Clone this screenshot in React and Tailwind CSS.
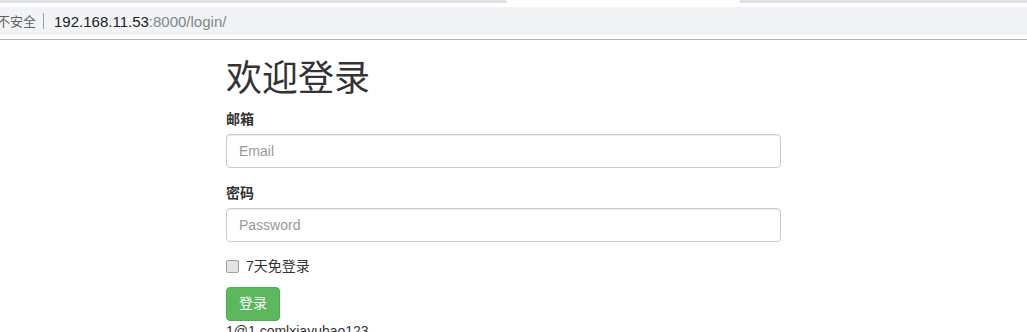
import React from 'react'

function BrowserBar() {
    return (
        <div className="w-full">
            <div className="flex h-[3px] bg-[#dee1e6]">
                <div className="ml-[506px] w-[234px] bg-white rounded-b-[3px]" />
            </div>
            <div className="h-[4px] bg-white" />
            <div className="h-[28px] bg-[#f1f3f4] flex items-center text-[15px] leading-none" style={{ fontFamily: '"Liberation Sans", "Noto Sans CJK SC", sans-serif' }}>
                <span className="ml-[-3px] text-[13px] text-[#5f6368]">不安全</span>
                <span className="ml-[7px] w-px h-[16px] bg-[#9aa0a6]" />
                <span className="ml-[10px] text-[#202124]">192.168.11.53</span>
                <span className="text-[#80868b]">:8000/login/</span>
            </div>
            <div className="h-[4px] bg-white" />
            <div className="h-px bg-[#b6b6b6]" />
        </div>
    )
}

function App() {
    return (
        <div className="w-[1027px] h-[332px] overflow-hidden bg-white text-[#333]" style={{ fontFamily: '"Liberation Sans", "Noto Sans CJK SC", sans-serif' }}>
            <BrowserBar />
            <div className="ml-[226px] w-[555px]">
                <h1 className="mt-[19px] mb-[10px] text-[36px] leading-[1.1] font-normal text-[#333]">欢迎登录</h1>

                <div className="mb-[15px]">
                    <label className="block mb-[5px] text-[14px] leading-[20px] font-bold">邮箱</label>
                    <input
                        type="email"
                        placeholder="Email"
                        className="block w-full h-[34px] px-3 py-1.5 text-[14px] border border-[#ccc] rounded-[4px] shadow-[inset_0_1px_1px_rgba(0,0,0,0.075)] placeholder:text-[#999] outline-none"
                    />
                </div>

                <div className="mb-[15px]">
                    <label className="block mb-[5px] text-[14px] leading-[20px] font-bold">密码</label>
                    <input
                        type="password"
                        placeholder="Password"
                        className="block w-full h-[34px] px-3 py-1.5 text-[14px] border border-[#ccc] rounded-[4px] shadow-[inset_0_1px_1px_rgba(0,0,0,0.075)] placeholder:text-[#999] outline-none"
                    />
                </div>

                <div className="mb-[10px]">
                    <label className="flex items-center h-[20px] text-[14px]">
                        <input type="checkbox" className="appearance-none w-[13px] h-[13px] m-0 mr-[7px] border border-[#9e9e9e] bg-[#e4e4e4] rounded-[2px]" />
                        7天免登录
                    </label>
                </div>

                <button className="h-[34px] px-3 text-[14px] text-white bg-[#5cb85c] border border-[#4cae4c] rounded-[4px]">
                    登录
                </button>
                <div className="text-[14px] leading-[20px]">1@1.comlxiayuhao123</div>
            </div>
        </div>
    )
}

export default App
